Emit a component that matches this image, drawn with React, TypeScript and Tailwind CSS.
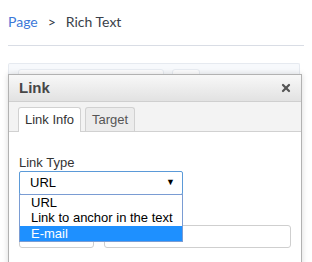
import { X } from "lucide-react"

export default function App() {
    return (
        <div className="w-[312px] h-[262px] overflow-hidden bg-white px-2">
            <div className="pt-[13px] flex items-center gap-[10px] text-[14px] leading-[18px] font-['Lato',sans-serif]">
                <span className="text-[#3c78d8]">Page</span>
                <span className="text-[#333a45]">&gt;</span>
                <span className="text-[#3a3f4a]">Rich Text</span>
            </div>
            <div className="mt-[14px] h-px bg-[#d9dde5]" />

            <div className="relative mt-[17px] w-[292px] h-[200px]">
                {/* editor behind the dialog */}
                <div className="h-full border-t border-l border-r border-[#e6eaf0] bg-[#f7f9fc] rounded-t-[2px]">
                    <div className="flex gap-[8px] pl-[9px] pt-[5px]">
                        <div className="w-[146px] h-[12px] rounded-[3px] border border-[#e8ecf2] bg-[#fdfdfe]" />
                        <div className="w-[28px] h-[12px] rounded-[3px] border border-[#e8ecf2] bg-[#fdfdfe]" />
                    </div>
                </div>

                {/* dialog */}
                <div className="absolute left-0 top-[11px] w-[294px] h-[200px] border border-[#b2b2b2] bg-white font-['Liberation_Sans',Arial,sans-serif] shadow-[0_0_6px_rgba(0,0,0,0.15)]">
                    <div className="h-[27px] flex items-center justify-between pl-[10px] pr-[9px] bg-gradient-to-b from-[#f8f8f8] to-[#e2e2e2] border-b border-[#cfcfcf]">
                        <span className="text-[15px] font-bold text-[#474747]">Link</span>
                        <X className="w-[12px] h-[12px] text-[#555]" strokeWidth={4.5} />
                    </div>
                    <div className="h-[30px] flex items-end gap-[4px] pl-[9px] bg-[#f3f3f3] border-b border-[#d1d1d1]">
                        <div className="w-[63px] h-[25px] -mb-px flex items-center justify-center bg-white border border-b-0 border-[#d1d1d1] rounded-t-[3px] text-[13px] text-[#333]">
                            Link Info
                        </div>
                        <div className="w-[50px] h-[24px] flex items-center justify-center bg-[#ececec] border border-b-0 border-[#d1d1d1] rounded-t-[3px] text-[13px] text-[#555]">
                            Target
                        </div>
                    </div>
                    <div className="relative px-[10px] pt-[23px]">
                        <div className="text-[13px] leading-[15px] text-[#333]">Link Type</div>
                        <div className="mt-[1px] w-[164px] h-[24px] flex items-center justify-between pl-[10px] pr-[7px] border border-[#5b9ad8] rounded-[2px] text-[13px] text-black">
                            <span>URL</span>
                            <span className="text-[9px]">▼</span>
                        </div>
                        <div className="mt-[30px] flex gap-[10px]">
                            <div className="w-[75px] h-[23px] border border-[#cfcfcf] rounded-[3px]" />
                            <div className="w-[188px] h-[23px] border border-[#cfcfcf] rounded-[3px]" />
                        </div>

                        {/* open select list */}
                        <div className="absolute left-[10px] top-[62px] w-[164px] border border-[#7a9cd3] bg-white text-[13px] leading-[15px] text-black">
                            <div className="pl-[11px] h-[15px]">URL</div>
                            <div className="pl-[11px] h-[16px]">Link to anchor in the text</div>
                            <div className="pl-[11px] h-[15px] bg-[#1e90ff] text-white">E-mail</div>
                        </div>
                    </div>
                </div>
            </div>
        </div>
    )
}
